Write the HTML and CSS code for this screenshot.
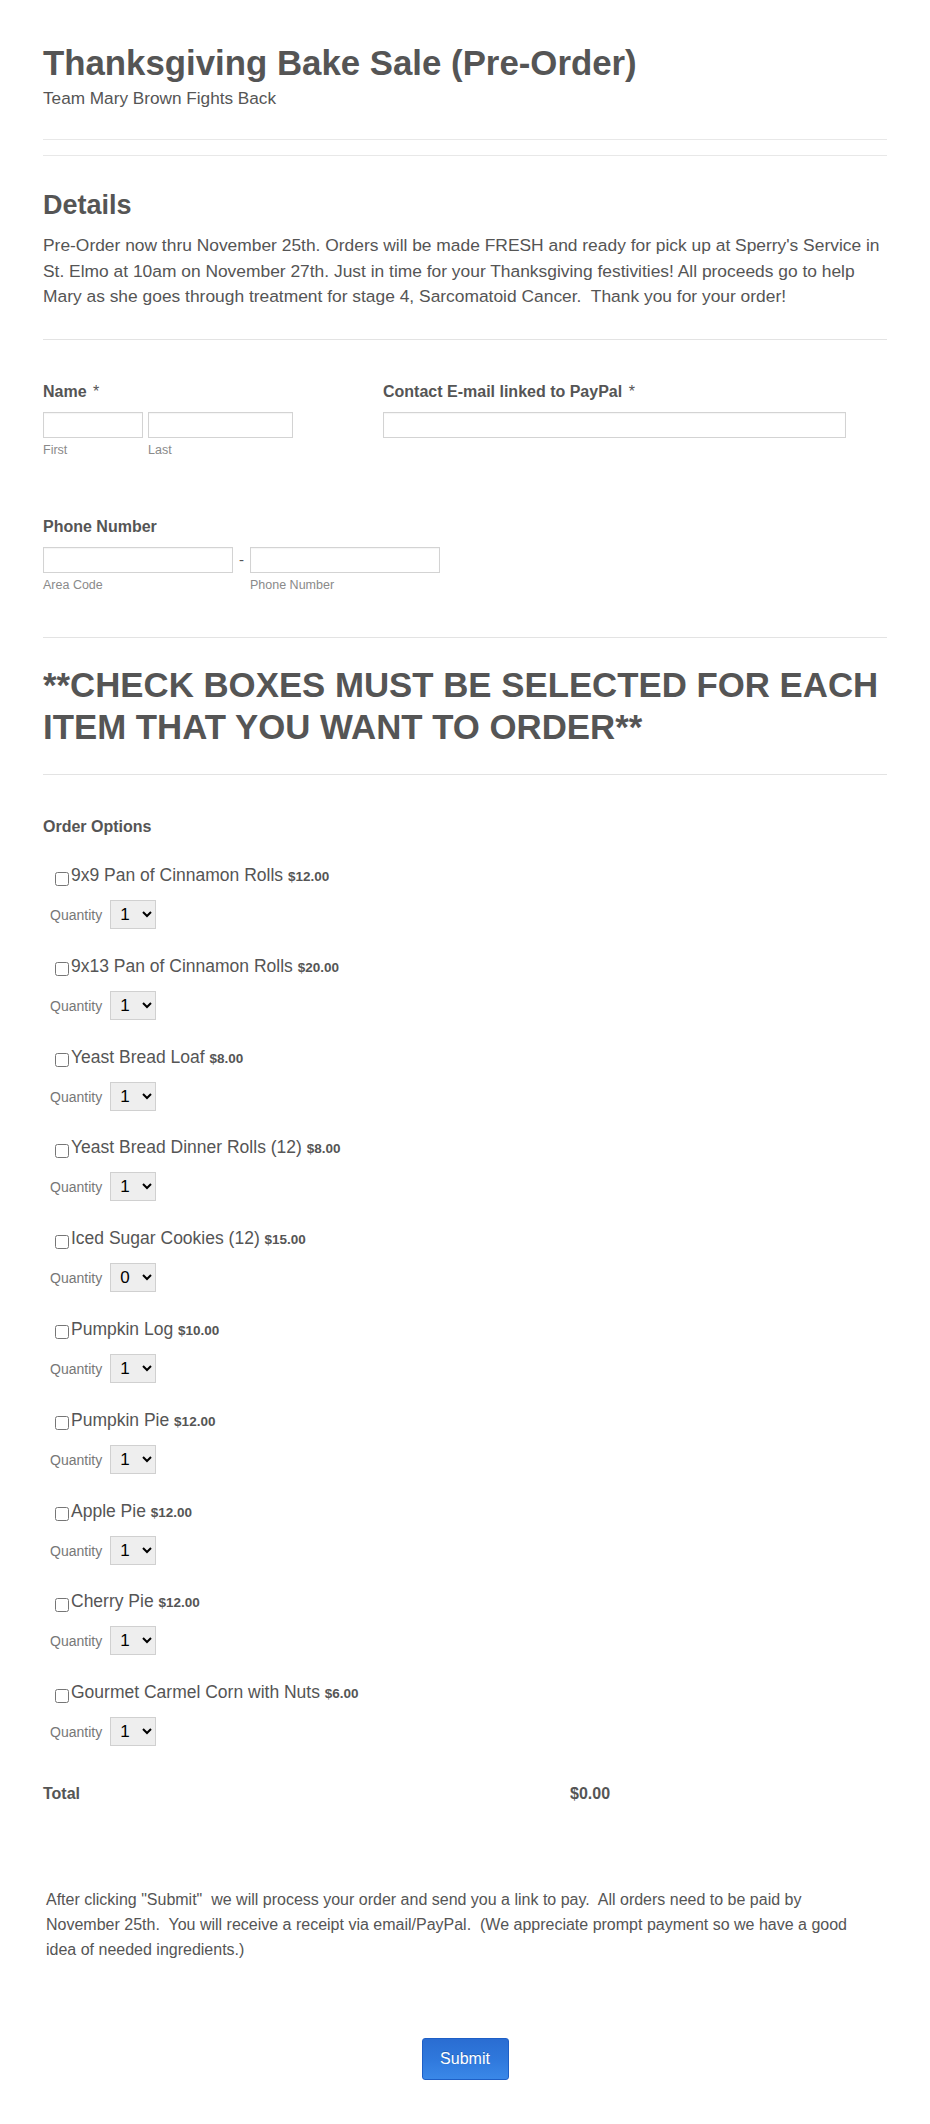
FILE: index.html
```html
<!DOCTYPE html>
<html lang="en">
<head>
<meta charset="utf-8">
<title>Thanksgiving Bake Sale (Pre-Order)</title>
<link rel="stylesheet" href="styles.css">
</head>
<body>
<div class="form">
  <header class="header">
    <h1 class="title">Thanksgiving Bake Sale (Pre-Order)</h1>
    <div class="subtitle">Team Mary Brown Fights Back</div>
  </header>

  <section class="details">
    <h2 class="details-title">Details</h2>
    <p class="details-text">Pre-Order now thru November 25th. Orders will be made FRESH and ready for pick up at Sperry's Service in St. Elmo at 10am on November 27th. Just in time for your Thanksgiving festivities! All proceeds go to help Mary as she goes through treatment for stage 4, Sarcomatoid Cancer.&nbsp; Thank you for your order!</p>
  </section>

  <section class="fields">
    <div class="row-two">
      <div class="field">
        <label class="label">Name <span class="req">*</span></label>
        <div class="inputs">
          <div class="sub">
            <input class="input w-first" type="text">
            <span class="sublabel">First</span>
          </div>
          <div class="sub">
            <input class="input w-last" type="text">
            <span class="sublabel">Last</span>
          </div>
        </div>
      </div>
      <div class="field">
        <label class="label">Contact E-mail linked to PayPal <span class="req">*</span></label>
        <div class="inputs">
          <input class="input w-email" type="text">
        </div>
      </div>
    </div>

    <div class="field phone-field">
      <label class="label">Phone Number</label>
      <div class="inputs">
        <div class="sub">
          <input class="input w-phone" type="text">
          <span class="sublabel">Area Code</span>
        </div>
        <span class="dash">-</span>
        <div class="sub">
          <input class="input w-phone" type="text">
          <span class="sublabel">Phone Number</span>
        </div>
      </div>
    </div>
  </section>

  <section class="notice">
    <h1 class="title">**CHECK BOXES MUST BE SELECTED FOR EACH ITEM THAT YOU WANT TO ORDER**</h1>
  </section>

  <section class="order">
    <div class="label">Order Options</div>
    <div class="items">
      <div class="item">
        <label class="item-line"><input type="checkbox" class="check"><span class="item-name">9x9 Pan of Cinnamon Rolls <span class="price">$12.00</span></span></label>
        <div class="qty-row"><span class="qty-label">Quantity</span><select class="qty"><option>1</option><option>2</option><option>3</option></select></div>
      </div>
      <div class="item">
        <label class="item-line"><input type="checkbox" class="check"><span class="item-name">9x13 Pan of Cinnamon Rolls <span class="price">$20.00</span></span></label>
        <div class="qty-row"><span class="qty-label">Quantity</span><select class="qty"><option>1</option><option>2</option><option>3</option></select></div>
      </div>
      <div class="item">
        <label class="item-line"><input type="checkbox" class="check"><span class="item-name">Yeast Bread Loaf <span class="price">$8.00</span></span></label>
        <div class="qty-row"><span class="qty-label">Quantity</span><select class="qty"><option>1</option><option>2</option><option>3</option></select></div>
      </div>
      <div class="item">
        <label class="item-line"><input type="checkbox" class="check"><span class="item-name">Yeast Bread Dinner Rolls (12) <span class="price">$8.00</span></span></label>
        <div class="qty-row"><span class="qty-label">Quantity</span><select class="qty"><option>1</option><option>2</option><option>3</option></select></div>
      </div>
      <div class="item">
        <label class="item-line"><input type="checkbox" class="check"><span class="item-name">Iced Sugar Cookies (12) <span class="price">$15.00</span></span></label>
        <div class="qty-row"><span class="qty-label">Quantity</span><select class="qty"><option>0</option><option>1</option><option>2</option></select></div>
      </div>
      <div class="item">
        <label class="item-line"><input type="checkbox" class="check"><span class="item-name">Pumpkin Log <span class="price">$10.00</span></span></label>
        <div class="qty-row"><span class="qty-label">Quantity</span><select class="qty"><option>1</option><option>2</option><option>3</option></select></div>
      </div>
      <div class="item">
        <label class="item-line"><input type="checkbox" class="check"><span class="item-name">Pumpkin Pie <span class="price">$12.00</span></span></label>
        <div class="qty-row"><span class="qty-label">Quantity</span><select class="qty"><option>1</option><option>2</option><option>3</option></select></div>
      </div>
      <div class="item">
        <label class="item-line"><input type="checkbox" class="check"><span class="item-name">Apple Pie <span class="price">$12.00</span></span></label>
        <div class="qty-row"><span class="qty-label">Quantity</span><select class="qty"><option>1</option><option>2</option><option>3</option></select></div>
      </div>
      <div class="item">
        <label class="item-line"><input type="checkbox" class="check"><span class="item-name">Cherry Pie <span class="price">$12.00</span></span></label>
        <div class="qty-row"><span class="qty-label">Quantity</span><select class="qty"><option>1</option><option>2</option><option>3</option></select></div>
      </div>
      <div class="item">
        <label class="item-line"><input type="checkbox" class="check"><span class="item-name">Gourmet Carmel Corn with Nuts <span class="price">$6.00</span></span></label>
        <div class="qty-row"><span class="qty-label">Quantity</span><select class="qty"><option>1</option><option>2</option><option>3</option></select></div>
      </div>
    </div>

    <div class="total-row">
      <span class="total-label">Total</span>
      <span class="total-value">$0.00</span>
    </div>

    <p class="after-text">After clicking "Submit"&nbsp; we will process your order and send you a link to pay.&nbsp; All orders need to be paid by November 25th.&nbsp; You will receive a receipt via email/PayPal.&nbsp; (We appreciate prompt payment so we have a good idea of needed ingredients.)</p>

    <div class="submit-wrap">
      <button class="submit" type="button">Submit</button>
    </div>
  </section>
</div>
</body>
</html>
```

FILE: styles.css
```css
html, body {
  margin: 0;
  padding: 0;
  background: #ffffff;
}

body {
  font-family: "Liberation Sans", Arial, sans-serif;
  color: #555555;
}

.form {
  padding: 0 43px;
}

/* header */
.header {
  padding-top: 42px;
  padding-bottom: 31px;
  border-bottom: 1px solid #e8e8e8;
}

.title {
  margin: 0;
  font-size: 34.8px;
  line-height: 42px;
  font-weight: bold;
  color: #555555;
}

.subtitle {
  margin-top: 4px;
  font-size: 17.2px;
  line-height: 20px;
}

/* details */
.details {
  margin-top: 15px;
  border-top: 1px solid #e8e8e8;
  padding-top: 33px;
  padding-bottom: 29.5px;
  border-bottom: 1px solid #e3e3e3;
}

.details-title {
  margin: 0;
  font-size: 27px;
  line-height: 32px;
  font-weight: bold;
}

.details-text {
  margin: 12px 0 0;
  font-size: 17.4px;
  line-height: 25.5px;
}

/* fields */
.fields {
  padding-top: 42px;
  padding-bottom: 44.5px;
  border-bottom: 1px solid #e3e3e3;
}

.row-two {
  display: grid;
  grid-template-columns: 340px 1fr;
}

.field {
  display: flex;
  flex-direction: column;
}

.label {
  font-size: 16px;
  line-height: 20px;
  font-weight: bold;
  color: #555555;
}

.req {
  font-weight: normal;
  margin-left: 2px;
}

.inputs {
  display: flex;
  align-items: flex-start;
  gap: 5px;
  margin-top: 10px;
}

.sub {
  display: flex;
  flex-direction: column;
}

.input {
  box-sizing: border-box;
  height: 26px;
  margin: 0;
  border: 1px solid #d3d3d3;
  box-shadow: inset 0 1px 1px rgba(0, 0, 0, 0.04);
  background: #fff;
  border-radius: 0;
  padding: 2px 4px;
  font-family: inherit;
  font-size: 14px;
}

.w-first { width: 100px; }
.w-last { width: 145px; }
.w-email { width: 463px; }
.w-phone { width: 190px; }

.sublabel {
  margin-top: 3.5px;
  font-size: 12.5px;
  line-height: 16px;
  color: #8a8a8a;
}

.phone-field {
  margin-top: 59.5px;
}

.phone-field .inputs {
  gap: 0;
}

.dash {
  width: 17px;
  height: 26px;
  line-height: 26px;
  text-align: center;
  font-size: 15px;
}

/* notice */
.notice {
  padding-top: 26px;
  padding-bottom: 26px;
  border-bottom: 1px solid #e3e3e3;
}

/* order */
.order {
  padding-top: 41.5px;
}

.items {
  display: flex;
  flex-direction: column;
  gap: 26.8px;
  margin-top: 28.5px;
}

.item {
  display: flex;
  flex-direction: column;
}

.item-line {
  display: flex;
  align-items: center;
  height: 22px;
  padding-left: 8px;
  font-size: 17.5px;
  line-height: 22px;
  color: #555555;
}

.check {
  flex: none;
  width: 14px;
  height: 14px;
  margin: 5px 2px 0 4px;
}

.item-name {
  white-space: nowrap;
}

.price {
  font-size: 13.5px;
  font-weight: bold;
}

.qty-row {
  display: flex;
  align-items: center;
  margin-top: 13px;
  padding-left: 7px;
  height: 29px;
}

.qty-label {
  font-size: 14px;
  line-height: 16px;
  color: #777777;
  margin-top: 1px;
  margin-right: 8px;
}

.qty {
  box-sizing: border-box;
  width: 46px;
  height: 29px;
  margin: 0;
  border: 1px solid #d0d0d0;
  border-radius: 0;
  background-color: #eeeeee;
  color: #000000;
  font-family: "Liberation Sans", Arial, sans-serif;
  font-size: 17px;
  padding: 0 2px 0 5px;
}

.total-row {
  display: grid;
  grid-template-columns: 527px 1fr;
  margin-top: 37.5px;
  font-size: 16px;
  line-height: 20px;
  font-weight: bold;
}

.after-text {
  margin: 83px 0 0;
  padding: 0 18px 0 3px;
  font-size: 16px;
  line-height: 25px;
}

.submit-wrap {
  display: flex;
  justify-content: center;
  margin-top: 76px;
  padding-bottom: 40px;
}

.submit {
  box-sizing: border-box;
  width: 87px;
  height: 42px;
  border: 1px solid #1e5fc6;
  border-radius: 3px;
  background: linear-gradient(to bottom, #2a6dd2 0%, #2f78dc 50%, #3a88e8 100%);
  color: #ffffff;
  font-family: "Liberation Sans", Arial, sans-serif;
  font-size: 16px;
  text-shadow: 0 -1px 0 rgba(0, 0, 0, 0.2);
  padding: 0;
}
```
